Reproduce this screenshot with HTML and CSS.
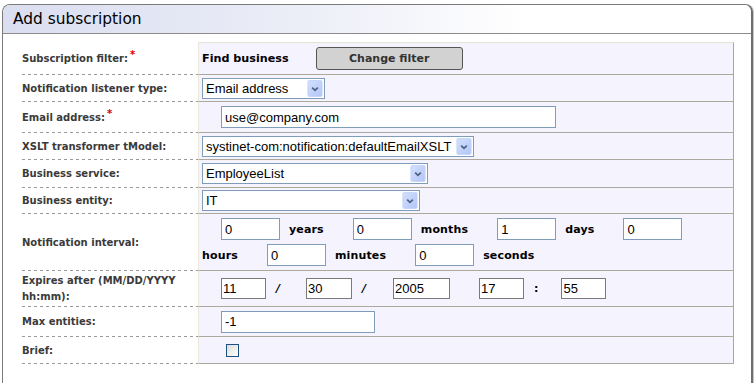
FILE: index.html
```html
<!DOCTYPE html>
<html lang="en">

<head>
    <meta charset="UTF-8">
    <title>Add subscription</title>
    <link rel="stylesheet" href="styles.css">
</head>

<body>
    <div class="panel">
        <div class="panel-head">Add subscription</div>
        <div class="form">
            <div class="row r1">
                <div class="label"><span>Subscription filter:<sup>*</sup></span></div>
                <div class="value first">
                    <b class="find">Find business</b>
                    <button class="btn">Change filter</button>
                </div>
            </div>
            <div class="row r2">
                <div class="label"><span>Notification listener type:</span></div>
                <div class="value">
                    <span class="select w-type">
                        <select><option>Email address</option></select>
                        <svg class="arrow" width="16" height="18" viewBox="0 0 16 18"><defs><linearGradient id="g1" x1="0" y1="0" x2="1" y2="1"><stop offset="0" stop-color="#d3e0fd"/><stop offset="1" stop-color="#b1c5f6"/></linearGradient></defs><rect x="0.5" y="0.5" width="15" height="17" rx="1.5" fill="url(#g1)" stroke="#c3d3fb"/><path d="M5 8 L8 11 L11 8" fill="none" stroke="#4d6185" stroke-width="1.8"/></svg>
                    </span>
                </div>
            </div>
            <div class="row r3">
                <div class="label"><span>Email address:<sup>*</sup></span></div>
                <div class="value"><input class="txt w-email" type="text" value="use@company.com"></div>
            </div>
            <div class="row r4">
                <div class="label"><span>XSLT transformer tModel:</span></div>
                <div class="value">
                    <span class="select w-xslt">
                        <select><option>systinet-com:notification:defaultEmailXSLT</option></select>
                        <svg class="arrow" width="16" height="18" viewBox="0 0 16 18"><rect x="0.5" y="0.5" width="15" height="17" rx="1.5" fill="url(#g1)" stroke="#c3d3fb"/><path d="M5 8 L8 11 L11 8" fill="none" stroke="#4d6185" stroke-width="1.8"/></svg>
                    </span>
                </div>
            </div>
            <div class="row r5">
                <div class="label"><span>Business service:</span></div>
                <div class="value">
                    <span class="select w-service">
                        <select><option>EmployeeList</option></select>
                        <svg class="arrow" width="16" height="18" viewBox="0 0 16 18"><rect x="0.5" y="0.5" width="15" height="17" rx="1.5" fill="url(#g1)" stroke="#c3d3fb"/><path d="M5 8 L8 11 L11 8" fill="none" stroke="#4d6185" stroke-width="1.8"/></svg>
                    </span>
                </div>
            </div>
            <div class="row r6">
                <div class="label"><span>Business entity:</span></div>
                <div class="value">
                    <span class="select w-entity">
                        <select><option>IT</option></select>
                        <svg class="arrow" width="16" height="18" viewBox="0 0 16 18"><rect x="0.5" y="0.5" width="15" height="17" rx="1.5" fill="url(#g1)" stroke="#c3d3fb"/><path d="M5 8 L8 11 L11 8" fill="none" stroke="#4d6185" stroke-width="1.8"/></svg>
                    </span>
                </div>
            </div>
            <div class="row r7">
                <div class="label"><span>Notification interval:</span></div>
                <div class="value interval">
                    <div class="line">
                        <input class="txt num" type="text" value="0"><b class="unit">years</b>
                        <input class="txt num" type="text" value="0"><b class="unit">months</b>
                        <input class="txt num" type="text" value="1"><b class="unit">days</b>
                        <input class="txt num" type="text" value="0">
                    </div>
                    <div class="line">
                        <b class="unit lead">hours</b>
                        <input class="txt num" type="text" value="0"><b class="unit">minutes</b>
                        <input class="txt num" type="text" value="0"><b class="unit">seconds</b>
                    </div>
                </div>
            </div>
            <div class="row r8">
                <div class="label"><span>Expires after (MM/DD/YYYY hh:mm):</span></div>
                <div class="value date">
                    <input class="dt d-mm" type="text" value="11"><b class="sep">/</b>
                    <input class="dt d-dd" type="text" value="30"><b class="sep">/</b>
                    <input class="dt d-yy" type="text" value="2005">
                    <input class="dt d-hh" type="text" value="17"><b class="sep colon">:</b>
                    <input class="dt d-mi" type="text" value="55">
                </div>
            </div>
            <div class="row r9">
                <div class="label"><span>Max entities:</span></div>
                <div class="value"><input class="txt w-max" type="text" value="-1"></div>
            </div>
            <div class="row r10">
                <div class="label"><span>Brief:</span></div>
                <div class="value"><input class="check" type="checkbox"></div>
            </div>
        </div>
    </div>
</body>

</html>
```

FILE: styles.css
```css
* {
    margin: 0;
    padding: 0;
    box-sizing: border-box;
}

html,
body {
    overflow: hidden;
    background: #fff;
}

.panel {
    margin: 4px 1px 0 2px;
    height: 400px;
    border: 1px solid #7a7a7a;
    border-right: 2px solid #6e6e6e;
    border-bottom: none;
    border-radius: 8px 8px 0 0;
    box-shadow: 1px 0 0 #c8c8c8;
}

.panel-head {
    height: 29px;
    padding-left: 10px;
    border-bottom: 1px solid #8c8c8c;
    border-radius: 7px 7px 0 0;
    background: linear-gradient(to right, #dadef0 0%, #e9ebf6 35%, #fff 70%);
    font-family: "DejaVu Sans", Verdana, sans-serif;
    font-size: 15.4px;
    line-height: 29px;
    color: #000;
}

.form {
    margin: 8px 0 0 19px;
    width: 712px;
}

.row {
    display: grid;
    grid-template-columns: 176px 536px;
}

.label {
    display: flex;
    align-items: center;
    background: repeating-linear-gradient(to right, #9a9a9a 0 3px, transparent 3px 6px) left bottom / 100% 1px no-repeat;
    font-family: "DejaVu Sans", Verdana, sans-serif;
    font-size: 10px;
    font-weight: bold;
    line-height: 16px;
    color: #3a3a3a;
    padding-right: 2px;
}

.label sup {
    color: #e00000;
    font-size: 10px;
    line-height: 0;
    vertical-align: 4px;
    margin-left: 2px;
}

.value {
    display: flex;
    align-items: center;
    padding-left: 3px;
    background: #f5f3fe;
    border-left: 1px solid #ece8dc;
    border-right: 1px solid #aca89c;
    border-bottom: 1px solid #aca89c;
}

.value.first {
    border-top: 1px solid #e6e2d5;
}

.r1 { height: 33px; }
.r2 { height: 27px; }
.r3 { height: 31px; }
.r4 { height: 27px; }
.r5 { height: 28px; }
.r6 { height: 26px; }
.r7 { height: 57px; }
.r8 { height: 36px; }
.r9 { height: 30px; }
.r10 { height: 27px; }

.find {
    font-family: "DejaVu Sans", Verdana, sans-serif;
    font-size: 11.2px;
    color: #000;
}

.btn {
    margin-left: 27px;
    width: 147px;
    height: 23px;
    border: 1px solid #555;
    border-radius: 3px;
    background: #d2d2d2;
    font-family: "DejaVu Sans", Verdana, sans-serif;
    font-size: 11px;
    font-weight: bold;
    color: #333;
}

.select {
    position: relative;
    display: inline-block;
    height: 21px;
}

.select select {
    appearance: none;
    -webkit-appearance: none;
    width: 100%;
    height: 21px;
    border: 1px solid #7f9db9;
    background: #fff;
    padding-left: 3px;
    font-family: "Liberation Sans", Arial, sans-serif;
    font-size: 13px;
    color: #000;
    outline: none;
}

.select .arrow {
    position: absolute;
    right: 2px;
    top: 2px;
    height: 17px;
}

.w-type { width: 123px; }
.w-xslt { width: 272px; }
.w-service { width: 226px; }
.w-entity { width: 218px; }

.r2 .value { padding-top: 1px; }

.txt {
    height: 22px;
    border: 1px solid #7f9db9;
    background: #fff;
    padding-left: 3px;
    font-family: "Liberation Sans", Arial, sans-serif;
    font-size: 13px;
    color: #000;
    outline: none;
}

.w-email {
    margin-left: 19px;
    width: 335px;
}

.w-max {
    margin-left: 19px;
    width: 154px;
}

.interval {
    flex-direction: column;
    align-items: flex-start;
    justify-content: center;
    gap: 4px;
}

.line {
    display: flex;
    align-items: center;
}

.num {
    width: 59px;
    margin-left: 19px;
}

.unit {
    margin-left: 9px;
    margin-right: 10px;
    font-family: "DejaVu Sans", Verdana, sans-serif;
    font-size: 11px;
    letter-spacing: 0.15px;
    color: #000;
}

.unit.lead {
    margin-left: 0;
}

.dt {
    height: 21px;
    border: 1px solid #7a7a7a;
    background: #fff;
    padding-left: 1px;
    font-family: "Liberation Sans", Arial, sans-serif;
    font-size: 13px;
    color: #000;
    outline: none;
}

.sep {
    margin-left: 10px;
    font-family: "DejaVu Sans", Verdana, sans-serif;
    font-size: 11px;
    font-style: italic;
    color: #000;
}

.sep.colon {
    font-style: normal;
}

.d-mm { margin-left: 19px; width: 45px; }
.d-dd { margin-left: 26px; width: 46px; }
.d-yy { margin-left: 27px; width: 57px; }
.d-hh { margin-left: 29px; width: 45px; }
.d-mi { margin-left: 23px; width: 45px; }

.check {
    appearance: none;
    -webkit-appearance: none;
    margin-left: 24px;
    width: 13px;
    height: 13px;
    border: 1px solid #1c5180;
    background: linear-gradient(135deg, #dcdcd7, #fff);
}
```
